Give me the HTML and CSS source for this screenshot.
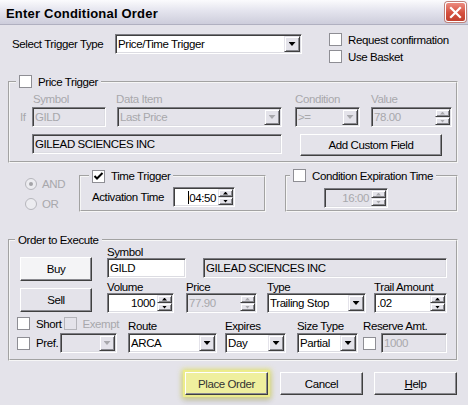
FILE: index.html
```html
<!DOCTYPE html>
<html lang="en">
<head>
    <meta charset="UTF-8">
    <title>Enter Conditional Order</title>
    <link rel="stylesheet" href="styles.css">
</head>
<body>
<div class="window">
    <div class="titlebar">
        <span class="title">Enter Conditional Order</span>
        <span class="close">
            <svg width="13" height="13" viewBox="0 0 13 13"><path d="M2 2 L11 11 M11 2 L2 11" stroke="#fff" stroke-width="2.2" stroke-linecap="square"/></svg>
        </span>
    </div>

    <div class="content">
        <div class="trigger-row">
            <span class="trigger-label">Select Trigger Type</span>
            <div class="field combo trigger-type"><span class="val">Price/Time Trigger</span><span class="drop"></span></div>
            <div class="options">
                <div class="check"><span class="box"></span>Request confirmation</div>
                <div class="check"><span class="box"></span>Use Basket</div>
            </div>
        </div>

        <fieldset class="group price-group">
            <legend><span class="box"></span>Price Trigger</legend>
            <div class="caps off">
                <span class="cap-symbol">Symbol</span>
                <span class="cap-item">Data Item</span>
                <span class="cap-cond">Condition</span>
                <span>Value</span>
            </div>
            <div class="price-fields">
                <span class="if off">If</span>
                <div class="field off w-sym"><span class="val">GILD</span></div>
                <div class="field combo off w-item"><span class="val">Last Price</span><span class="drop"></span></div>
                <div class="field combo off w-cond"><span class="val">&gt;=</span><span class="drop"></span></div>
                <div class="field off w-value"><span class="val">78.00</span><span class="spin"><i></i><i class="down"></i></span></div>
            </div>
            <div class="name-row">
                <div class="field ro w-name"><span class="val">GILEAD SCIENCES INC</span></div>
                <div class="btn w-custom">Add Custom Field</div>
            </div>
        </fieldset>

        <div class="mid-row">
            <div class="radios off">
                <div class="radio"><span class="dot on"></span>AND</div>
                <div class="radio"><span class="dot"></span>OR</div>
            </div>
            <fieldset class="group time-group">
                <legend><span class="box"><svg width="11" height="11" viewBox="0 0 11 11"><path d="M1.5 5 L4 7.5 L9.5 2" fill="none" stroke="#000" stroke-width="2"/></svg></span>Time Trigger</legend>
                <div class="time-line">
                    <span class="time-label">Activation Time</span>
                    <div class="field w-time"><span class="val right"><b class="caret"></b>04:50</span><span class="spin"><i></i><i class="down"></i></span></div>
                </div>
            </fieldset>
            <fieldset class="group expire-group">
                <legend><span class="box"></span>Condition Expiration Time</legend>
                <div class="field off w-expire"><span class="val right">16:00</span><span class="spin"><i></i><i class="down"></i></span></div>
            </fieldset>
        </div>

        <fieldset class="group order-group">
            <legend>Order to Execute</legend>
            <div class="order-top">
                <div class="side">
                    <div class="btn btn-buy">Buy</div>
                    <div class="btn btn-sell">Sell</div>
                </div>
                <div class="main">
                    <div class="cols">
                        <div class="col"><span class="cap">Symbol</span><div class="field w-osym"><span class="val">GILD</span></div></div>
                        <div class="col gap-name"><span class="cap">&nbsp;</span><div class="field ro w-oname"><span class="val">GILEAD SCIENCES INC</span></div></div>
                    </div>
                    <div class="cols second">
                        <div class="col"><span class="cap">Volume</span><div class="field w-vol"><span class="val right">1000</span><span class="spin"><i></i><i class="down"></i></span></div></div>
                        <div class="col gap-price"><span class="cap">Price</span><div class="field off w-price"><span class="val">77.90</span><span class="spin"><i></i><i class="down"></i></span></div></div>
                        <div class="col gap-type"><span class="cap">Type</span><div class="field combo w-type"><span class="val">Trailing Stop</span><span class="drop"></span></div></div>
                        <div class="col gap-trail"><span class="cap">Trail Amount</span><div class="field w-trail"><span class="val">.02</span><span class="spin"><i></i><i class="down"></i></span></div></div>
                    </div>
                </div>
            </div>
            <div class="order-bottom">
                <div class="flags">
                    <div class="flag-row">
                        <div class="check"><span class="box"></span>Short</div>
                        <div class="check off exempt"><span class="box"></span>Exempt</div>
                    </div>
                    <div class="flag-row pref-row">
                        <div class="check"><span class="box"></span>Pref.</div>
                        <div class="field combo off w-pref"><span class="val"></span><span class="drop"></span></div>
                    </div>
                </div>
                <div class="col low"><span class="cap">Route</span><div class="field combo w-route"><span class="val">ARCA</span><span class="drop"></span></div></div>
                <div class="col low gap-exp"><span class="cap">Expires</span><div class="field combo w-exp"><span class="val">Day</span><span class="drop"></span></div></div>
                <div class="col low gap-size"><span class="cap">Size Type</span><div class="field combo w-size"><span class="val">Partial</span><span class="drop"></span></div></div>
                <div class="col low gap-res"><span class="cap">Reserve Amt.</span>
                    <div class="reserve"><span class="box"></span><div class="field off w-res"><span class="val">1000</span></div></div>
                </div>
            </div>
        </fieldset>

        <div class="actions">
            <div class="btn place">Place Order</div>
            <div class="btn cancel">Cancel</div>
            <div class="btn help"><u>H</u>elp</div>
        </div>
    </div>
</div>
</body>
</html>
```

FILE: styles.css
```css
* {
    box-sizing: border-box;
}

body {
    margin: 0;
    background-color: #e4e3ea;
    font-family: "Liberation Sans", Arial, sans-serif;
    font-size: 11.5px;
    letter-spacing: -0.4px;
    color: #000;
}

.window {
    width: 468px;
    height: 405px;
    background-color: #e4e3ea;
    overflow: hidden;
}

/* title bar */
.titlebar {
    height: 25px;
    display: flex;
    align-items: center;
    justify-content: space-between;
    padding: 0 2px 0 6px;
    background: linear-gradient(#fbfbfd, #e4e4ee 45%, #cdcddb);
    border-bottom: 1px solid #b0b0c0;
}

.title {
    font-weight: bold;
    font-size: 13px;
    letter-spacing: 0.2px;
    padding-top: 2px;
}

.close {
    width: 21px;
    height: 20px;
    border: 1px solid #fff;
    border-radius: 3px;
    background: linear-gradient(#ec8c80, #d5503f 55%, #c2402f);
    box-shadow: 0 0 0 1px #c08078;
    display: flex;
    align-items: center;
    justify-content: center;
}

.content {
    padding: 0 10px 0 8px;
}

.off {
    color: #a8a8ac;
}

/* fields */
.field {
    height: 20px;
    display: flex;
    align-items: center;
    background-color: #fff;
    border: 1px solid;
    border-color: #7c7c82 #fff #fff #7c7c82;
    box-shadow: inset 1px 1px #404040, inset -1px -1px #dcdce2;
    padding-left: 2px;
    white-space: nowrap;
}

.field.off,
.field.ro {
    background-color: #e4e3ea;
}

.val {
    flex: 1;
    overflow: hidden;
}

.val.right {
    text-align: right;
    padding-right: 1px;
}

.caret {
    display: inline-block;
    width: 1px;
    height: 13px;
    background: #000;
    vertical-align: -2px;
}

.drop,
.spin i {
    background-color: #e4e3ea;
    border: 1px solid;
    border-color: #e4e3ea #404040 #404040 #e4e3ea;
    box-shadow: inset 1px 1px #fff, inset -1px -1px #8a8a90;
    display: flex;
    align-items: center;
    justify-content: center;
}

.drop {
    width: 16px;
    height: 16px;
    margin: 1px;
    flex: none;
}

.drop::after {
    content: "";
    width: 7px;
    height: 4px;
    background: #000;
    clip-path: polygon(0 0, 100% 0, 50% 100%);
}

.off .drop::after {
    background: #a8a8ac;
}

.spin {
    width: 15px;
    height: 16px;
    margin: 1px;
    display: flex;
    flex-direction: column;
    flex: none;
}

.spin i {
    flex: 1;
}

.spin i::after {
    content: "";
    width: 5px;
    height: 3px;
    background: #000;
    clip-path: polygon(50% 0, 100% 100%, 0 100%);
}

.spin i.down::after {
    clip-path: polygon(0 0, 100% 0, 50% 100%);
}

.off .spin i::after {
    background: #a8a8ac;
}

/* checkboxes */
.check {
    display: flex;
    align-items: center;
    height: 13px;
    white-space: nowrap;
    flex: none;
}

.box {
    display: inline-flex;
    align-items: center;
    justify-content: center;
    width: 13px;
    height: 13px;
    border: 1px solid #8e8e94;
    background-color: #fff;
    margin-right: 6px;
    flex: none;
    vertical-align: -2px;
}

.check.off .box {
    background-color: #e4e3ea;
    border-color: #b4b4ba;
}

/* buttons */
.btn {
    height: 23px;
    display: flex;
    align-items: center;
    justify-content: center;
    background-color: #e4e3ea;
    border: 1px solid;
    border-color: #fff #404040 #404040 #fff;
    box-shadow: inset -1px -1px #8a8a90;
    white-space: nowrap;
}

/* top row */
.trigger-row {
    display: flex;
    margin-top: 8px;
}

.trigger-label {
    margin: 1px 0 0 4px;
    width: 103px;
    line-height: 20px;
}

.trigger-type {
    width: 187px;
    margin-top: 1px;
}

.options {
    margin-left: 27px;
    display: flex;
    flex-direction: column;
    gap: 4px;
}

/* group boxes */
.group {
    margin: 0;
    min-width: 0;
    border: 2px groove #f6f6f6;
}

.group legend {
    line-height: 14px;
    padding: 0 3px;
    white-space: nowrap;
}

.price-group {
    margin-top: 12px;
    padding: 4px 0 5px 0;
}

.price-group legend {
    margin-left: 6px;
}

.caps {
    display: flex;
    line-height: 13px;
    padding-left: 23px;
}

.cap-symbol { width: 83px; }
.cap-item { width: 179px; }
.cap-cond { width: 76px; }

.price-fields {
    display: flex;
    margin-top: 1px;
    padding-left: 10px;
}

.if {
    width: 12px;
    line-height: 20px;
}

.w-sym { width: 74px; margin-right: 11px; }
.w-item { width: 165px; margin-right: 13px; }
.w-cond { width: 65px; margin-right: 11px; }
.w-value { width: 81px; }

.name-row {
    display: flex;
    margin-top: 7px;
    padding-left: 22px;
}

.w-name { width: 250px; }

.w-custom {
    width: 142px;
    height: 22px;
    margin-left: 18px;
}

/* middle row */
.mid-row {
    display: flex;
    margin-top: 6px;
}

.radios {
    width: 54px;
    margin-left: 17px;
    padding-top: 8px;
    display: flex;
    flex-direction: column;
    gap: 7px;
}

.radio {
    display: flex;
    align-items: center;
    height: 13px;
}

.dot {
    width: 12px;
    height: 12px;
    border-radius: 50%;
    border: 1px solid #b6b6bc;
    background-color: #ececf0;
    margin-right: 5px;
    display: flex;
    align-items: center;
    justify-content: center;
}

.dot.on::after {
    content: "";
    width: 4px;
    height: 4px;
    border-radius: 50%;
    background: #a4a4a8;
}

.time-group {
    width: 187px;
    padding: 4px 0 3px 11px;
}

.time-group legend {
    margin-left: -3px;
}

.time-line {
    display: flex;
}

.time-label {
    width: 81px;
    line-height: 20px;
}

.w-time { width: 62px; }

.expire-group {
    flex: 1;
    margin-left: 19px;
    padding: 5px 0 2px 37px;
}

.expire-group legend {
    margin-left: -34px;
}

.w-expire { width: 64px; }

/* order box */
.order-group {
    margin-top: 22px;
    padding: 0 0 6px 0;
}

.order-group legend {
    line-height: 12px;
    margin-left: 5px;
}

.order-top {
    display: flex;
}

.side {
    width: 97px;
    padding: 11px 0 0 10px;
    display: flex;
    flex-direction: column;
    gap: 7px;
}

.side .btn {
    width: 72px;
    height: 24px;
}

.btn-buy {
    background-color: #f4f4f6;
}

.cols {
    display: flex;
}

.cols.second {
    margin-top: 3px;
}

.col {
    display: flex;
    flex-direction: column;
}

.cap {
    line-height: 12px;
    white-space: nowrap;
}

.gap-name { margin-left: 17px; }
.w-osym { width: 79px; }
.w-oname { width: 244px; }

.w-vol { width: 67px; }
.gap-price { margin-left: 12px; }
.w-price { width: 71px; }
.gap-type { margin-left: 10px; }
.w-type { width: 99px; }
.gap-trail { margin-left: 8px; }
.w-trail { width: 73px; }

.order-bottom {
    display: flex;
    margin-top: 3px;
    padding-left: 7px;
}

.flags {
    width: 100px;
    margin-right: 11px;
}

.flag-row {
    display: flex;
    align-items: center;
    height: 15px;
}

.pref-row {
    height: 20px;
    margin-top: 2px;
}

.exempt {
    margin-left: 2px;
}

.w-pref {
    width: 57px;
    margin-left: auto;
}

.col.low .cap {
    line-height: 13px;
    margin-top: 4px;
}

.w-route { width: 89px; }
.gap-exp { margin-left: 8px; }
.w-exp { width: 61px; }
.gap-size { margin-left: 11px; }
.w-size { width: 61px; }
.gap-res { margin-left: 5px; }

.reserve {
    display: flex;
    align-items: center;
}

.reserve .box {
    margin-right: 5px;
}

.w-res { width: 66px; }

/* bottom buttons */
.actions {
    display: flex;
    justify-content: flex-end;
    margin-top: 11px;
    padding-right: 1px;
}

.actions .btn {
    width: 83px;
    height: 23px;
}

.place {
    background-color: #efef9e;
    color: #333;
    box-shadow: inset -1px -1px #8a8a90, 0 0 0 2px #ecec8c, 0 0 5px 3px rgba(228, 228, 96, 0.8), 0 3px 6px 2px rgba(0, 0, 0, 0.2);
}

.cancel {
    margin-left: 12px;
}

.help {
    margin-left: 11px;
}
```
